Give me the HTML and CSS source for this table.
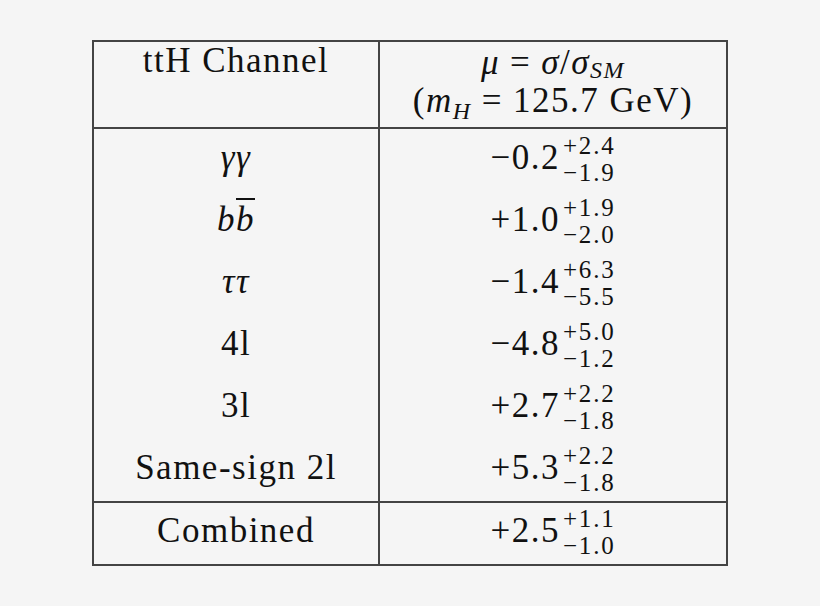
FILE: index.html
```html
<!DOCTYPE html>
<html lang="en">
<head>
<meta charset="utf-8">
<title>ttH channel signal strengths</title>
<link rel="stylesheet" href="styles.css">
</head>
<body>
<main class="page">
  <table class="results">
    <thead>
      <tr>
        <th class="head head-left">ttH Channel</th>
        <th class="head head-right">
          <div class="hline"><i>μ</i><span class="rel">=</span><i>σ</i>/<i>σ</i><sub class="sub"><i>SM</i></sub></div>
          <div class="hline">(<i>m</i><sub class="sub sub-h"><i>H</i></sub><span class="rel">=</span>125.7 GeV)</div>
        </th>
      </tr>
    </thead>
    <tbody class="channels">
      <tr><td><i>γγ</i></td><td>−0.2<span class="err"><span class="up">+2.4</span><span class="dn">−1.9</span></span></td></tr>
      <tr><td><i>b<span class="bar">b</span></i></td><td>+1.0<span class="err"><span class="up">+1.9</span><span class="dn">−2.0</span></span></td></tr>
      <tr><td><i>ττ</i></td><td>−1.4<span class="err"><span class="up">+6.3</span><span class="dn">−5.5</span></span></td></tr>
      <tr><td>4l</td><td>−4.8<span class="err"><span class="up">+5.0</span><span class="dn">−1.2</span></span></td></tr>
      <tr><td>3l</td><td>+2.7<span class="err"><span class="up">+2.2</span><span class="dn">−1.8</span></span></td></tr>
      <tr><td>Same-sign 2l</td><td>+5.3<span class="err"><span class="up">+2.2</span><span class="dn">−1.8</span></span></td></tr>
    </tbody>
    <tbody class="combined">
      <tr><td>Combined</td><td>+2.5<span class="err"><span class="up">+1.1</span><span class="dn">−1.0</span></span></td></tr>
    </tbody>
  </table>
</main>
</body>
</html>
```

FILE: styles.css
```css
html, body {
  margin: 0;
  padding: 0;
  background: #f5f5f5;
}

.page {
  padding: 40px 0 0 92px;
  font-family: "Liberation Serif", "Times New Roman", serif;
  color: #111;
}

.results {
  border-collapse: collapse;
  border: 2px solid #444;
  width: 636px;
  font-size: 35px;
  letter-spacing: 1.5px;
}

.results th,
.results td {
  border: 0;
  padding: 0;
  text-align: center;
  font-weight: normal;
  vertical-align: top;
  white-space: nowrap;
}

.results th:first-child,
.results td:first-child {
  width: 284px;
  border-right: 2px solid #444;
}

.results .head {
  height: 83px;
  line-height: 37px;
  border-bottom: 2px solid #444;
}

.results .head-right {
  padding-top: 2px;
}

.hline {
  line-height: 38px;
}

.results i {
  font-style: italic;
}

.rel {
  margin: 0 10px;
}

.sub {
  font-size: 24px;
  line-height: 0;
  vertical-align: -4px;
}

.sub-h {
  vertical-align: -7px;
}

.results .channels td {
  height: 58px;
  line-height: 58px;
  padding-bottom: 4px;
}

.results .combined td {
  height: 55px;
  line-height: 55px;
  padding-bottom: 5px;
  border-top: 2px solid #444;
}

.bar {
  text-decoration: overline;
  text-decoration-thickness: 2px;
}

.err {
  display: inline-block;
  font-size: 25px;
  line-height: 27px;
  letter-spacing: 1.8px;
  vertical-align: -12px;
  margin-left: 3px;
  text-align: left;
}

.up,
.dn {
  display: block;
}
```
